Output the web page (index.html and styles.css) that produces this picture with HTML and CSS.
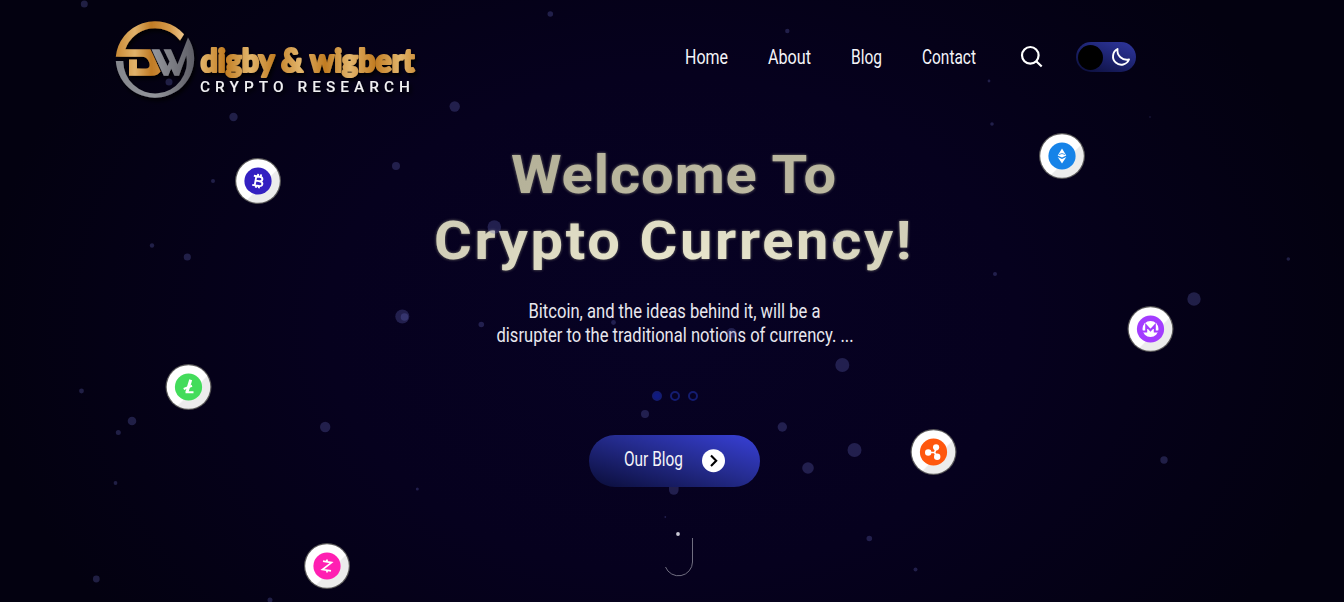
FILE: index.html
```html
<!DOCTYPE html>
<html lang="en">
<head>
<meta charset="utf-8">
<title>Digby &amp; Wigbert Crypto Research</title>
<link rel="stylesheet" href="styles.css">
</head>
<body>
<header class="header">
  <a class="logo" aria-label="digby &amp; wigbert">
    <svg width="306" height="85" viewBox="0 0 306 85">
      <defs>
        <linearGradient id="gold" x1="0" x2="1"><stop offset="0" stop-color="#c98a35"/><stop offset=".28" stop-color="#e0b26a"/><stop offset=".52" stop-color="#c07b25"/><stop offset=".8" stop-color="#d69b4c"/><stop offset="1" stop-color="#edc68c"/></linearGradient>
        <linearGradient id="goldText" gradientUnits="userSpaceOnUse" x1="85" x2="110" spreadMethod="reflect"><stop offset="0" stop-color="#e2b56c"/><stop offset="1" stop-color="#c17c22"/></linearGradient>
        <linearGradient id="steel" x1="0" x2="1"><stop offset="0" stop-color="#85878d"/><stop offset=".5" stop-color="#92949a"/><stop offset="1" stop-color="#5e5e66"/></linearGradient>
        <filter id="logoShade" x="-10%" y="-10%" width="125%" height="130%"><feDropShadow dx="2" dy="3" stdDeviation="2" flood-color="#000" flood-opacity=".9"/></filter>
      </defs>
      <g filter="url(#logoShade)">
        <path fill="url(#gold)" d="M.8 41.700A39.200 39.200 0 0 1 69 19.300L65 25.500A31.500 31.500 0 0 0 10.300 34.300H35.500L45.500 56.500Q43 60.700 36 60.700H14V44.500H22V53.500H31Q36 53 34 47Q32 41.700 27 41.700Z"/>
        <path fill="url(#steel)" d="M.8 46H8.300A31.800 31.800 0 1 0 71.300 40.500L64 60.700H59.500L56.200 53.500L53.200 60.700H48.800L36.500 34.300H44.500L52.500 51L54.500 46.500L48.500 34.300H56L62.500 49.500L73 22.500A39.200 39.200 0 1 1 .8 46Z"/>
        <text class="logo-name" x="85.500" y="57" textLength="214" lengthAdjust="spacingAndGlyphs">digby &amp; wigbert</text>
        <text class="logo-tag" x="85" y="76.500" textLength="215" lengthAdjust="spacingAndGlyphs">CRYPTO RESEARCH</text>
      </g>
    </svg>
  </a>
  <nav class="nav">
    <a><svg class="label" width="43" height="30"><text x="0" y="21" textLength="43" lengthAdjust="spacingAndGlyphs">Home</text></svg></a>
    <a><svg class="label" width="43" height="30"><text x="0" y="21" textLength="43" lengthAdjust="spacingAndGlyphs">About</text></svg></a>
    <a><svg class="label" width="31" height="30"><text x="0" y="21" textLength="31" lengthAdjust="spacingAndGlyphs">Blog</text></svg></a>
    <a><svg class="label" width="54" height="30"><text x="0" y="21" textLength="54" lengthAdjust="spacingAndGlyphs">Contact</text></svg></a>
  </nav>
  <svg class="search" width="24" height="24" viewBox="0 0 24 24" fill="none" stroke="#fff" stroke-width="2.200"><circle cx="10.300" cy="9.300" r="8.300"/><path d="M16 15L21.700 20.500"/></svg>
  <div class="toggle">
    <span class="knob"></span>
    <svg width="20" height="20" viewBox="0 0 20 20" fill="none" stroke="#fff" stroke-width="1.900" stroke-linejoin="round"><path d="M6.500 2A8.300 8.300 0 1 0 18 12.500C11.500 14 5.500 8.500 6.500 2Z"/></svg>
  </div>
</header>

<main class="hero">
  <h1 class="title">
    <svg width="500" height="150" viewBox="0 0 500 150">
      <defs><radialGradient id="cream" gradientUnits="userSpaceOnUse" cx="230" cy="140" r="280"><stop offset="0" stop-color="#f8f6dc"/><stop offset=".4" stop-color="#bdb9a2"/><stop offset="1" stop-color="#b5b299"/></radialGradient>
      <radialGradient id="creamLow" gradientUnits="userSpaceOnUse" cx="230" cy="130" r="260"><stop offset="0" stop-color="#fbf9df"/><stop offset="1" stop-color="#d2cfb8"/></radialGradient></defs>
      <text transform="translate(87 58) scale(1.08 1)" fill="url(#cream)" textLength="301">Welcome To</text>
      <text transform="translate(10 124) scale(1.08 1)" fill="url(#creamLow)" textLength="442">Crypto Currency!</text>
    </svg>
  </h1>
  <p class="lead">
    <svg width="360" height="60" viewBox="0 0 360 60">
      <text x="34.500" y="24" textLength="292" lengthAdjust="spacingAndGlyphs">Bitcoin, and the ideas behind it, will be a</text>
      <text x="2.500" y="48" textLength="357" lengthAdjust="spacingAndGlyphs">disrupter to the traditional notions of currency. ...</text>
    </svg>
  </p>
  <div class="pager"><i class="on"></i><i></i><i></i></div>
  <a class="button">
    <svg class="label" width="59" height="30"><text x="0" y="20" textLength="59" lengthAdjust="spacingAndGlyphs">Our Blog</text></svg>
    <svg width="24" height="24" viewBox="0 0 24 24"><circle cx="11.500" cy="11.700" r="11.500" fill="#fff"/><path d="M9 6.500L14.200 11.700L9 16.900" fill="none" stroke="#000" stroke-width="2.100"/></svg>
  </a>
  <svg class="scroll" width="30" height="48" viewBox="0 0 30 48"><circle cx="14" cy="4" r="1.900" fill="#c9c8d4"/><path d="M28.500 8V32A14 14 0 0 1 1.500 37" fill="none" stroke="#706e80" stroke-width="1"/></svg>
</main>

<svg class="sky" width="1344" height="602" viewBox="0 0 1344 602">
  <g class="particles">
    <circle cx="84.300" cy="4" r="3.500"/><circle cx="550.300" cy="14" r="2.800"/><circle cx="787.300" cy="31" r="2.200"/><circle cx="169" cy="82" r="3.500"/><circle cx="454.700" cy="106.500" r="5.200"/><circle cx="233.500" cy="117" r="4.200"/><circle cx="396" cy="166" r="4"/><circle cx="213" cy="181" r="2"/><circle cx="152" cy="245.500" r="2.200"/><circle cx="187.300" cy="257" r="3.600"/><circle cx="494.300" cy="227" r="6.800"/><circle cx="402.300" cy="316.500" r="7"/><circle cx="404.500" cy="317" r="3.800"/><circle cx="481.300" cy="324.500" r="2.800"/><circle cx="613.500" cy="322.500" r="2.400"/><circle cx="731.500" cy="333" r="5"/><circle cx="842.300" cy="365" r="7"/><circle cx="989" cy="81" r="1.400"/><circle cx="992" cy="124" r="1.800"/><circle cx="1150" cy="117" r=".8"/><circle cx="995" cy="274" r="2"/><circle cx="1194" cy="299" r="6.700"/><circle cx="1288.300" cy="259" r="1.800"/><circle cx="834" cy="240" r="2"/><circle cx="645" cy="414" r="4"/><circle cx="782.300" cy="427" r="4.700"/><circle cx="854.500" cy="450" r="7"/><circle cx="808" cy="468" r="5.800"/><circle cx="1164" cy="460" r="3.700"/><circle cx="869.300" cy="538.500" r="2.800"/><circle cx="915.500" cy="569.500" r="2"/><circle cx="325.200" cy="427" r="5.200"/><circle cx="132" cy="421" r="4.300"/><circle cx="118.300" cy="432.500" r="2.500"/><circle cx="81.500" cy="391" r="2.400"/><circle cx="115.500" cy="483" r="1.900"/><circle cx="96.300" cy="579" r="3.400"/><circle cx="417.300" cy="489" r="1.500"/><circle cx="270" cy="600" r="2.500"/><path d="M669 487V490A4.800 4.800 0 0 0 678.600 490V487Z"/><circle cx="665.300" cy="517" r=".9"/>
  </g>
  <defs>
    <linearGradient id="disc" x1="0" y1="0" x2="1" y2="1"><stop offset=".58" stop-color="#fff"/><stop offset=".6" stop-color="#ececec"/></linearGradient>
    <g id="coin"><circle r="23" fill="#77776f" opacity=".75"/><circle r="21.800" fill="url(#disc)"/></g>
  </defs>
  <g transform="translate(258 181)"><use href="#coin"/><circle r="13.600" fill="#3320c1"/><g transform="rotate(10)" fill="none" stroke="#fff" stroke-width="1.900"><path d="M-5-4.500H1Q4-4.500 4-2.200Q4 0 1 0H-2M1 0Q4.800 0 4.800 2.300Q4.800 4.800 1.500 4.800H-5M-2.500-4.500V4.800M-1-7V-4.500M2-7V-4.500M-1 4.800V7M2 4.800V7"/></g></g>
  <g transform="translate(1062 156)"><use href="#coin"/><circle r="13.600" fill="#1683e8"/><path d="M0-7.500L4.300-.5L0 1.500L-4.300-.5ZM-4.300 1L0 3L4.300 1L0 7.500Z" fill="#fff"/><path d="M-3.200-1.400L0-2.500L3.200-1.400" fill="none" stroke="#1683e8" stroke-width=".8"/></g>
  <g transform="translate(1150.500 329)"><use href="#coin"/><circle r="13.600" fill="#a33cff"/><circle r="8" fill="#fff"/><path d="M-9 2.500H-4.300V-3.500L0 1.200L4.300-3.500V2.500H9" fill="none" stroke="#a33cff" stroke-width="2"/></g>
  <g transform="translate(188.500 387)"><use href="#coin"/><circle r="13.600" fill="#43dc5b"/><path d="M2.200-7.200L-1.500 5" fill="none" stroke="#fff" stroke-width="3"/><path d="M-3 5.200H5M-4.800 2L3.500-1.200" fill="none" stroke="#fff" stroke-width="2"/></g>
  <g transform="translate(933.500 452)"><use href="#coin"/><circle r="13.600" fill="#ff570d"/><g fill="#fff"><circle cx="-5.300" cy=".5" r="3.200"/><circle cx="2.600" cy="-4.700" r="3.100"/><circle cx="3.700" cy="4.700" r="3.200"/><path d="M-5-.3L.5-.3L2-4L3.500-3.500L2 .5L4.500 4L3 5L.4 1.200H-5Z"/></g></g>
  <g transform="translate(327 566)"><use href="#coin"/><circle r="13.600" fill="#ff1fb2"/><path d="M-4-4.800L4.500-3.400L-4.500 3.500L4 4.800M0-6.600V-4M0 4V6.600" fill="none" stroke="#fff" stroke-width="1.700"/></g>
</svg>
</body>
</html>
```
FILE: styles.css
```css
* { box-sizing: border-box; }
body {
  margin: 0;
  height: 602px;
  overflow: hidden;
  position: relative;
  background: radial-gradient(ellipse 690px 500px at 50% 54%, #070224 0%, #06011e 50%, #030110 100%);
  color: #fff;
  font-family: Roboto, "Open Sans", sans-serif;
}
svg { display: block; overflow: visible; flex: none; }
.header {
  height: 115px;
  padding-left: 115px;
  display: flex;
  align-items: center;
}
.logo { width: 306px; height: 85px; }
.logo-name { font: 900 33px Lato, sans-serif; fill: url(#goldText); stroke: url(#goldText); stroke-width: 2.200; stroke-linejoin: round; }
.logo-tag { font: 500 14px Roboto, sans-serif; letter-spacing: 4.600px; fill: #f0f0f2; }
.nav { display: flex; gap: 40px; margin-left: 264px; }
.label { font-size: 19.500px; font-weight: 400; fill: #f4f4f8; }
.search { margin-left: 44px; }
.toggle {
  width: 60px;
  height: 30px;
  margin: -1px 0 0 32px;
  padding: 0 5px 0 2px;
  border-radius: 15px;
  display: flex;
  align-items: center;
  justify-content: space-between;
  background: linear-gradient(20deg, #0b0d38 0%, #202779 60%, #30379f 100%);
}
.knob { width: 25px; height: 25px; border-radius: 50%; background: #000; }
.hero { padding-left: 4px; display: flex; flex-direction: column; align-items: center; }
.title { margin: 20px 0 0; height: 159px; font: 700 53.500px Roboto, sans-serif; }
.title svg { filter: drop-shadow(0 0 1.500px #77756a); }
.lead { margin: 0; height: 97px; font-size: 20.500px; font-weight: 400; }
.lead svg { fill: #e8e7ee; }
.pager { display: flex; gap: 8px; margin-left: 2px; }
.pager i { width: 10px; height: 10px; border: 2px solid #141c70; border-radius: 50%; }
.pager .on { background: #101a82; }
.button {
  width: 171px;
  height: 52px;
  margin-top: 34px;
  padding: 0 34px 0 35px;
  border-radius: 26px;
  display: flex;
  align-items: center;
  justify-content: space-between;
  background: linear-gradient(17deg, #0a0d38 0%, #252c90 55%, #3840d8 100%);
}
.scroll { margin: 43px 0 0 10px; }
.sky { position: absolute; left: 0; top: 0; pointer-events: none; }
.particles { fill: #6568b8; fill-opacity: .3; }
```
